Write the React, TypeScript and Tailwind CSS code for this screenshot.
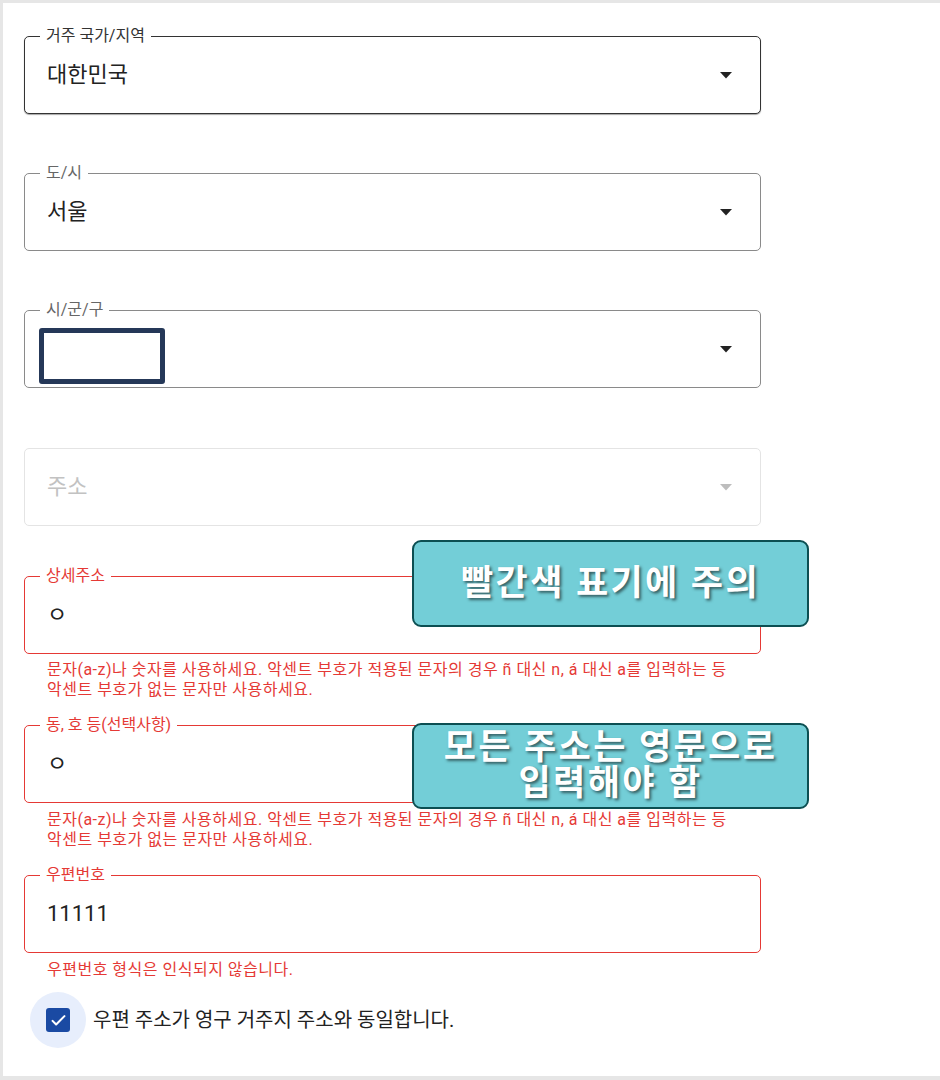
const font = 'font-["Roboto","Noto_Sans_CJK_KR",sans-serif]'

type Tone = 'focus' | 'normal' | 'disabled' | 'error'

const BORDER: Record<Tone, string> = {
  focus: 'border-[#333333] shadow-[0_1px_1px_rgba(0,0,0,0.35)]',
  normal: 'border-[#8a8a8a]',
  disabled: 'border-[#e4e4e4]',
  error: 'border-[#e53935]',
}

const LABEL: Record<Tone, string> = {
  focus: 'text-[#333333]',
  normal: 'text-[#666666]',
  disabled: 'text-[#666666]',
  error: 'text-[#e53935]',
}

function Caret({ disabled }: { disabled?: boolean }) {
  return (
    <svg width="14" height="8" viewBox="0 0 14 8" className="mr-[27px] shrink-0">
      <path d="M1 1h12L7 7.5z" fill={disabled ? '#bdbdbd' : '#222222'} />
    </svg>
  )
}

interface FieldProps {
  label?: string
  value?: string
  placeholder?: string
  tone: Tone
  select?: boolean
  className?: string
  children?: React.ReactNode
}

function Field({ label, value, placeholder, tone, select, className = '', children }: FieldProps) {
  return (
    <div className={`relative flex items-center h-[78px] rounded-[5px] border bg-white ${BORDER[tone]} ${className}`}>
      {label && (
        <span className={`absolute -top-[11px] left-[15px] px-[6px] bg-white text-[16px] leading-[20px] ${LABEL[tone]}`}>
          {label}
        </span>
      )}
      <span className={`flex-1 pl-[22px] text-[22px] leading-[28px] ${tone === 'disabled' ? 'text-[#c2c2c2]' : 'text-[#222222]'}`}>
        {value ?? placeholder}
      </span>
      {select && <Caret disabled={tone === 'disabled'} />}
      {children}
    </div>
  )
}

function ErrorText({ children, className = '' }: { children: React.ReactNode; className?: string }) {
  return <p className={`pl-[23px] text-[16px] leading-[20px] tracking-[0.5px] text-[#e53935] whitespace-nowrap ${className}`}>{children}</p>
}

const ACCENT_MSG = (
  <>
    문자(a-z)나 숫자를 사용하세요. 악센트 부호가 적용된 문자의 경우 ñ 대신 n, á 대신 a를 입력하는 등
    <br />
    악센트 부호가 없는 문자만 사용하세요.
  </>
)

function Callout({ className, children }: { className: string; children: React.ReactNode }) {
  return (
    <div
      className={`absolute left-[409px] w-[397px] flex flex-col items-center justify-center rounded-[9px] border-2 border-[#0c4f52] bg-[#73ced7] text-center text-white font-bold text-[35px] tracking-[2.4px] whitespace-nowrap [text-shadow:2px_2px_3px_rgba(0,0,0,0.55)] ${className}`}
    >
      {children}
    </div>
  )
}

export default function App() {
  return (
    <div className={`relative w-[940px] h-[1080px] box-border border-t-[3px] border-l-[3px] border-b-[4px] border-[#e6e6e6] bg-white ${font}`}>
      <div className="w-[758px] pl-[21px] pt-[33px] flex flex-col">
        <Field label="거주 국가/지역" value="대한민국" tone="focus" select />
        <Field label="도/시" value="서울" tone="normal" select className="mt-[59px]" />
        <Field label="시/군/구" value="" tone="normal" select className="mt-[59px]">
          {/* redacted value */}
          <div className="absolute left-[14px] top-[17px] w-[126px] h-[56px] rounded-[3px] border-[5px] border-[#253858]" />
        </Field>
        <Field placeholder="주소" tone="disabled" select className="mt-[60px]" />

        <Field label="상세주소" value="ㅇ" tone="error" className="mt-[50px]" />
        <ErrorText className="mt-[6px]">{ACCENT_MSG}</ErrorText>

        <Field label="동, 호 등(선택사항)" value="ㅇ" tone="error" className="mt-[25px]" />
        <ErrorText className="mt-[7px]">{ACCENT_MSG}</ErrorText>

        <Field label="우편번호" value="11111" tone="error" className="mt-[25px]" />
        <ErrorText className="mt-[7px]">우편번호 형식은 인식되지 않습니다.</ErrorText>

        <label className="mt-[12px] ml-[6px] flex items-center gap-[7px]">
          <span className="flex items-center justify-center w-[56px] h-[56px] rounded-full bg-[#e7eefc]">
            <span className="flex items-center justify-center w-[24px] h-[24px] rounded-[3px] bg-[#1a4aa3]">
              <svg width="19" height="19" viewBox="0 0 24 24" fill="none" stroke="white" strokeWidth="2.6" strokeLinecap="round" strokeLinejoin="round">
                <path d="M4.5 12.5l4.5 4.5L19.5 6.5" />
              </svg>
            </span>
          </span>
          <span className="text-[20px] leading-[26px] text-[#222222]">우편 주소가 영구 거주지 주소와 동일합니다.</span>
        </label>
      </div>

      <Callout className="top-[537px] h-[87px]">
        <span className="leading-[40px]">빨간색 표기에 주의</span>
      </Callout>
      <Callout className="top-[720px] h-[86px]">
        <span className="leading-[36px]">모든 주소는 영문으로</span>
        <span className="leading-[36px]">입력해야 함</span>
      </Callout>
    </div>
  )
}
